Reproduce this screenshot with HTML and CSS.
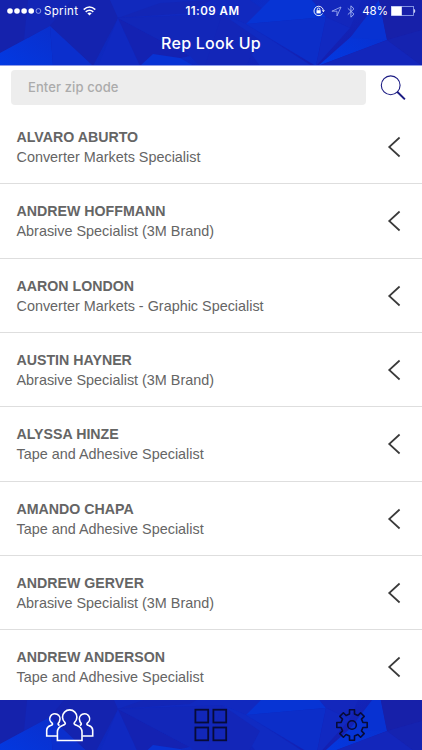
FILE: index.html
```
<!DOCTYPE html>
<html lang="en">

<head>
    <meta charset="UTF-8">
    <meta name="viewport" content="width=device-width, initial-scale=1.0">
    <title>Rep Look Up</title>
    <link rel="stylesheet" href="styles.css">
</head>

<body>
    <!-- Shared shapes -->
    <svg class="defs" width="0" height="0">
        <defs>
            <linearGradient id="shade" x1="0" y1="0" x2="1" y2="0.3">
                <stop offset="0" stop-color="#171da0" />
                <stop offset="0.25" stop-color="#1224b4" />
                <stop offset="0.6" stop-color="#0c2cc6" />
                <stop offset="1" stop-color="#161eae" />
            </linearGradient>
            <linearGradient id="glow" x1="0" y1="1" x2="1" y2="0">
                <stop offset="0" stop-color="#0239e2" />
                <stop offset="1" stop-color="#0a2fcc" />
            </linearGradient>
        </defs>
        <symbol id="facets" viewBox="0 0 422 66">
            <rect width="422" height="66" fill="url(#shade)" />
            <path d="M0 53L50 26L28 0H0z" fill="#1522ac" />
            <path d="M28 0H72L50 26L24 40z" fill="#1326b6" />
            <path d="M72 0H120L118 18L93 66L50 26z" fill="#1423af" />
            <path d="M110 0H190L118 18z" fill="#1129bd" />
            <path d="M118 18L190 0H250L270 14L246 24L222 14z" fill="#1129bf" />
            <path d="M118 18L160 3L211 0L190 13z" fill="#1326b6" />
            <path d="M0 53L50 26L53 66H0z" fill="url(#glow)" />
            <path d="M50 26L93 66H53z" fill="#0b2fcd" />
            <path d="M118 18L98 66H140z" fill="#1029c1" />
            <path d="M118 18L140 66L190 56z" fill="#1422b2" />
            <path d="M118 18L190 56L200 66H211L222 14z" fill="#1227b9" />
            <path d="M140 66L153 54L180 58L194 66z" fill="#0833d4" />
            <path d="M222 14L246 24L312 66H260z" fill="#102bc2" />
            <path d="M222 14L260 40L246 66H205z" fill="#1326b8" />
            <path d="M246 24L270 0H312L326 17z" fill="#0734d4" />
            <path d="M246 24L326 17L316 66z" fill="#0c2ec9" />
            <path d="M312 0H362L350 28L326 17z" fill="#1327bc" />
            <path d="M326 17L350 28L316 66z" fill="#1129c1" />
            <path d="M318 66L379 12L387 40z" fill="url(#glow)" />
            <path d="M379 0L350 38L387 40z" fill="#0832d2" />
            <path d="M379 0H422V30L387 40z" fill="#1720a9" />
            <path d="M387 40L422 30V66z" fill="#1523b0" />
            <path d="M387 40L422 66H318z" fill="#1326bb" />
        </symbol>
        <symbol id="arrow" viewBox="0 0 14 22">
            <path d="M12.6 1.5L2.2 11L12.6 20.5" fill="none" stroke="#3a3a3a" stroke-width="1.7" />
        </symbol>
    </svg>

    <header class="header">
        <svg class="facets"><use href="#facets" width="422" height="66" /></svg>
        <div class="status-bar">
            <div class="carrier">
                <svg width="36" height="8" viewBox="0 0 36 8" fill="#fff">
                    <circle cx="3" cy="4" r="2.8" />
                    <circle cx="10" cy="4" r="2.8" />
                    <circle cx="17.1" cy="4" r="2.8" />
                    <circle cx="24.2" cy="4" r="2.8" />
                    <circle cx="31.4" cy="4" r="2.4" fill="none" stroke="#b9c4f5" stroke-width="0.7" />
                </svg>
                <span class="carrier-name">Sprint</span>
                <svg class="wifi" width="13" height="10" viewBox="0 0 13 10" fill="none" stroke="#fff" stroke-width="1.6">
                    <path d="M0.7 3.6Q6.5 -1.6 12.3 3.6" />
                    <path d="M2.7 5.9Q6.5 2.6 10.3 5.9" />
                    <path d="M6.5 9.4L4.3 7.3Q6.5 5.7 8.7 7.3z" fill="#fff" stroke="none" />
                </svg>
            </div>
            <div class="clock">11:09 AM</div>
            <div class="indicators">
                <svg width="12" height="12" viewBox="0 0 12 12" fill="none" stroke="#fff" stroke-width="0.9">
                    <path d="M9.6 8.6A4.7 4.7 0 1 1 10.3 5" />
                    <path d="M8.8 5.3H11.9L10.4 7.3z" fill="#fff" stroke="none" />
                    <rect x="3.5" y="5.2" width="4.2" height="3.2" fill="#fff" stroke="none" />
                    <path d="M4.3 5.3V4.3A1.3 1.3 0 0 1 6.9 4.3V5.3" />
                </svg>
                <svg class="location" width="11" height="11" viewBox="0 0 11 11" fill="none" stroke="#a9b8f4" stroke-width="0.8">
                    <path d="M0.9 5.2L10 1L6 10V5.2z" />
                </svg>
                <svg class="bluetooth" width="8" height="13" viewBox="0 0 8 13" fill="none" stroke="#a9b8f4" stroke-width="0.9">
                    <path d="M0.8 3.3L7 9.2L3.9 12.2V0.8L7 3.8L0.8 9.6" />
                </svg>
                <span class="percent">48%</span>
                <svg width="25" height="10" viewBox="0 0 25 10">
                    <rect x="0.4" y="0.5" width="22" height="9" fill="none" stroke="#9eb0f2" stroke-width="0.8" />
                    <rect x="0.4" y="0.5" width="10.4" height="9" fill="#fff" />
                    <path d="M23.3 3.3Q24.6 5 23.3 6.7z" fill="#fff" stroke="#fff" stroke-width="0.5" />
                </svg>
            </div>
        </div>
        <h1 class="title">Rep Look Up</h1>
    </header>

    <main class="content">
        <div class="search-bar">
            <input type="text" class="zip-input" placeholder="Enter zip code">
            <svg class="search-icon" width="26" height="26" viewBox="0 0 26 26" fill="none" stroke="#1b1b83">
                <circle cx="10.7" cy="10.3" r="9.4" stroke-width="1.1" />
                <path d="M17.2 16.8L24.9 24.4" stroke-width="2" />
            </svg>
        </div>

        <ul class="rep-list">
            <li class="rep">
                <div>
                    <div class="rep-name">ALVARO ABURTO</div>
                    <div class="rep-role">Converter Markets Specialist</div>
                </div>
                <svg class="arrow"><use href="#arrow" /></svg>
            </li>
            <li class="rep">
                <div>
                    <div class="rep-name">ANDREW HOFFMANN</div>
                    <div class="rep-role">Abrasive Specialist (3M Brand)</div>
                </div>
                <svg class="arrow"><use href="#arrow" /></svg>
            </li>
            <li class="rep">
                <div>
                    <div class="rep-name">AARON LONDON</div>
                    <div class="rep-role">Converter Markets - Graphic Specialist</div>
                </div>
                <svg class="arrow"><use href="#arrow" /></svg>
            </li>
            <li class="rep">
                <div>
                    <div class="rep-name">AUSTIN HAYNER</div>
                    <div class="rep-role">Abrasive Specialist (3M Brand)</div>
                </div>
                <svg class="arrow"><use href="#arrow" /></svg>
            </li>
            <li class="rep">
                <div>
                    <div class="rep-name">ALYSSA HINZE</div>
                    <div class="rep-role">Tape and Adhesive Specialist</div>
                </div>
                <svg class="arrow"><use href="#arrow" /></svg>
            </li>
            <li class="rep">
                <div>
                    <div class="rep-name">AMANDO CHAPA</div>
                    <div class="rep-role">Tape and Adhesive Specialist</div>
                </div>
                <svg class="arrow"><use href="#arrow" /></svg>
            </li>
            <li class="rep">
                <div>
                    <div class="rep-name">ANDREW GERVER</div>
                    <div class="rep-role">Abrasive Specialist (3M Brand)</div>
                </div>
                <svg class="arrow"><use href="#arrow" /></svg>
            </li>
            <li class="rep">
                <div>
                    <div class="rep-name">ANDREW ANDERSON</div>
                    <div class="rep-role">Tape and Adhesive Specialist</div>
                </div>
                <svg class="arrow"><use href="#arrow" /></svg>
            </li>
        </ul>
    </main>

    <nav class="tab-bar">
        <svg class="facets"><use href="#facets" y="-9" width="422" height="66" /></svg>
        <a class="tab">
            <svg width="50" height="34" viewBox="0 0 50 34" fill="none" stroke="#fff" stroke-width="1.6">
                <path d="M12 28H1.7V22Q2 18.8 5.6 17.6Q8.4 16.6 7.2 15.2A5.1 5.1 0 1 1 14.6 12.8Q14.4 14.2 13.2 15.4Q12.6 16.6 14.6 17.4" />
                <path d="M37.4 28H47.7V22Q47.4 18.8 43.8 17.6Q41 16.6 42.2 15.2A5.1 5.1 0 1 0 34.8 12.8Q35 14.2 36.2 15.4Q36.8 16.6 34.8 17.4" />
                <path d="M12.4 32.5V24Q12.6 19.2 17.4 17.5Q21.6 16.2 19.8 14.4A7.2 7.2 0 1 1 29.6 14.4Q27.8 16.2 32 17.5Q36.8 19.2 37 24V32.5z" />
            </svg>
        </a>
        <a class="tab">
            <svg width="34" height="34" viewBox="0 0 34 34" fill="none" stroke="#070b38" stroke-width="1.8">
                <rect x="1.4" y="1.7" width="12.8" height="12.8" />
                <rect x="19.4" y="1.7" width="12.8" height="12.8" />
                <rect x="1.4" y="19.5" width="12.8" height="12.8" />
                <rect x="19.4" y="19.5" width="12.8" height="12.8" />
            </svg>
        </a>
        <a class="tab">
            <svg width="34" height="34" viewBox="-17 -17 34 34" fill="none" stroke="#070b38" stroke-width="1.6" stroke-linejoin="round">
                <path d="M-2.5 -15.2H2.5V-10.9L5.9 -9.5L8.6 -12.2L12.2 -8.6L9.5 -5.9L10.9 -2.5H15.2V2.5H10.9L9.5 5.9L12.2 8.6L8.6 12.2L5.9 9.5L2.5 10.9V15.2H-2.5V10.9L-5.9 9.5L-8.6 12.2L-12.2 8.6L-9.5 5.9L-10.9 2.5H-15.2V-2.5H-10.9L-9.5 -5.9L-12.2 -8.6L-8.6 -12.2L-5.9 -9.5L-2.5 -10.9z" />
                <circle r="4.3" />
            </svg>
        </a>
    </nav>
</body>

</html>
```
FILE: styles.css
```
* {
    box-sizing: border-box;
}

body {
    margin: 0;
    height: 750px;
    display: flex;
    flex-direction: column;
    overflow: hidden;
    background: #fff;
    font-family: "Liberation Sans", Arial, sans-serif;
    color: #656565;
}

svg {
    display: block;
    flex-shrink: 0;
}

.defs {
    position: absolute;
}

.header {
    position: relative;
    height: 66px;
    flex-shrink: 0;
    overflow: hidden;
    color: #fff;
    border-bottom: 1px solid #8f9ce8;
}

/* Blue background behind the header and tab bar */
.facets {
    position: absolute;
    top: 0;
    left: 0;
    width: 422px;
    height: 66px;
    z-index: -1;
}

.status-bar {
    display: grid;
    grid-template-columns: 1fr auto 1fr;
    align-items: center;
    height: 22px;
    padding: 0 6px 0 7px;
    font-family: Inter, sans-serif;
    font-size: 11.5px;
}

.carrier,
.indicators {
    display: flex;
    align-items: center;
}

.carrier-name {
    margin-left: 1px;
    letter-spacing: 0.35px;
}

.wifi {
    margin-left: 5px;
}

.clock {
    padding-left: 2px;
    font-weight: 600;
    letter-spacing: 0.5px;
}

.indicators {
    justify-content: flex-end;
}

.location {
    margin-left: 6px;
}

.bluetooth {
    margin-left: 5px;
}

.percent {
    margin: 0 3px 0 7px;
}

.title {
    margin: 9px 0 0;
    font-family: Inter, sans-serif;
    font-size: 16px;
    font-weight: 500;
    line-height: 24px;
    letter-spacing: 0.25px;
    text-align: center;
}

.content {
    flex: 1;
    min-height: 0;
    overflow: hidden;
}

.search-bar {
    display: flex;
    align-items: center;
    height: 44px;
    padding: 0 16px 1px 11px;
}

.zip-input {
    width: 355px;
    height: 35px;
    padding: 0 17px 2px;
    border: none;
    border-radius: 4px;
    background: #ededed;
    font-family: Inter, sans-serif;
    font-size: 13px;
    font-weight: 500;
    letter-spacing: 0.1px;
    outline: none;
}

.zip-input::placeholder {
    color: #ababab;
    opacity: 1;
}

.search-icon {
    margin-left: auto;
}

.rep-list {
    margin: 0;
    padding: 0;
    list-style: none;
}

.rep {
    display: flex;
    justify-content: space-between;
    align-items: center;
    height: 74.34px;
    padding: 1px 21px 0 16.5px;
    border-bottom: 1px solid #dedede;
}

.rep-name {
    font-size: 14.2px;
    font-weight: bold;
    line-height: 20px;
}

.rep-role {
    font-size: 14.4px;
    line-height: 20px;
}

.arrow {
    width: 14px;
    height: 22px;
}

.tab-bar {
    position: relative;
    z-index: 0;
    display: grid;
    grid-template-columns: repeat(3, 1fr);
    align-items: center;
    height: 50px;
    flex-shrink: 0;
    overflow: hidden;
}

.tab {
    display: flex;
    justify-content: center;
}
```
